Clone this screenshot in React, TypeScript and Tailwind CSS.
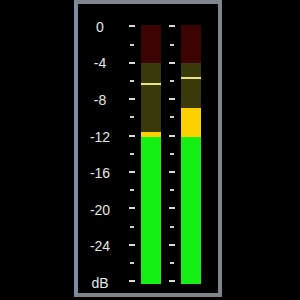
import React from "react";

const labels = ["0", "-4", "-8", "-12", "-16", "-20", "-24", "dB"];

function Ticks() {
  const ticks = Array.from({ length: 15 }, (_, i) => i);
  return (
    <div className="flex flex-col mt-[13.4px] w-[7px]">
      {ticks.map((i) => (
        <div key={i} className="h-[18.2px] shrink-0 flex items-center justify-center">
          <div
            className={
              i % 2 === 0
                ? "w-[6px] h-[2px] bg-[#d8d8d8]"
                : "w-[4px] h-[2px] bg-[#d0d0d0]"
            }
          />
        </div>
      ))}
    </div>
  );
}

function Bar({ peakTop, yellowTop }: { peakTop: number; yellowTop: number }) {
  const redH = 38;
  const olive1 = peakTop - 63;
  const olive2 = yellowTop - peakTop - 1.5;
  const yellowH = 136.5 - yellowTop;
  return (
    <div className="flex flex-col mt-[21px] w-[20px] h-[259px]">
      <div className="bg-[#3d0303] shrink-0" style={{ height: redH }} />
      <div className="bg-[#39390a] shrink-0" style={{ height: olive1 }} />
      <div className="h-[1.5px] shrink-0 bg-[#e6e67a]" />
      <div className="bg-[#39390a] shrink-0" style={{ height: olive2 }} />
      <div className="bg-[#ffd000] shrink-0" style={{ height: yellowH }} />
      <div className="flex-1 bg-[#14f014]" />
    </div>
  );
}

export default function App() {
  return (
    <div className="w-[300px] h-[300px] bg-black flex overflow-hidden">
      <div className="ml-[74px] w-[148px] h-[297px] shrink-0 border-4 border-[#7f858b] border-l-[#7d8ea3] bg-black flex">
        <div
          className="flex flex-col mt-[5px] ml-[6px] w-[32px] text-[14px] text-[#e6e6e6]"
          style={{ fontFamily: '"Liberation Sans", Arial, sans-serif' }}
        >
          {labels.map((l) => (
            <div key={l} className="h-[36.6px] shrink-0 flex items-center justify-center">
              {l}
            </div>
          ))}
        </div>
        <div className="ml-[12px]">
          <Ticks />
        </div>
        <div className="ml-[6px]">
          <Bar peakTop={83} yellowTop={131.5} />
        </div>
        <div className="ml-[7px]">
          <Ticks />
        </div>
        <div className="ml-[6px]">
          <Bar peakTop={77} yellowTop={107.5} />
        </div>
      </div>
    </div>
  );
}
